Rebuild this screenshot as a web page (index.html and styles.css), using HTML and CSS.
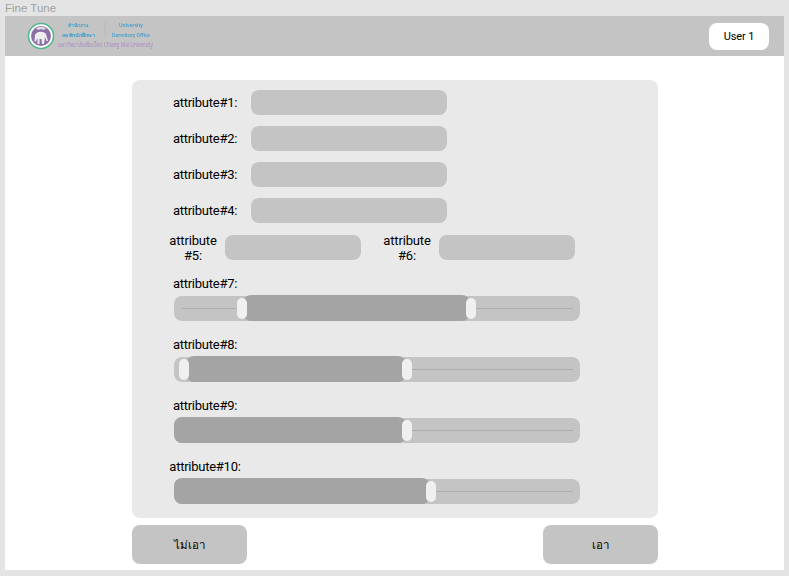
FILE: index.html
```html
<!DOCTYPE html>
<html>
<head>
    <title>Fine Tune</title>
    <link rel="stylesheet" href="styles.css">
</head>
<body>
    <div class="page-title">Fine Tune</div>
    <div class="window">
        <div class="header">
            <svg class="logo" width="130" height="32" viewBox="0 0 130 32">
                <circle cx="13" cy="15" r="12.5" fill="#fff" stroke="#4fb58a" stroke-width="1.5"/>
                <circle cx="13" cy="15" r="10" fill="#8d6fa8"/>
                <path d="M8 8 C10 5 16 5 18 8 C16 9 14 9 13 8 C12 9 10 9 8 8 Z" fill="#ddd"/>
                <path d="M7 14 C9 10 15 10 18 13 L20 20 L18.5 20 L17 16 L16 23 L14 23 L13.5 18 L11.5 18 L11.5 23 L9.5 23 L9.5 17 L7.5 21 L6.5 20 Z" fill="#eee"/>
                <text class="logo-blue" x="40" y="6" textLength="20" lengthAdjust="spacingAndGlyphs">สำนักงาน</text>
                <text class="logo-blue" x="34" y="16" textLength="33" lengthAdjust="spacingAndGlyphs">หอพักนักศึกษา</text>
                <line x1="77" y1="1" x2="77" y2="17" stroke="#b4b4b4" stroke-width="0.6"/>
                <text class="logo-blue" x="91" y="6" textLength="24" lengthAdjust="spacingAndGlyphs">University</text>
                <text class="logo-blue" x="84" y="16" textLength="38" lengthAdjust="spacingAndGlyphs">Dormitory Office</text>
                <text class="logo-purple" x="30" y="26" textLength="95" lengthAdjust="spacingAndGlyphs">มหาวิทยาลัยเชียงใหม่ Chiang Mai University</text>
            </svg>
            <button class="user-btn">User 1</button>
        </div>
        <div class="content">
            <div class="card">
                <div class="field">
                    <label class="field-label">attribute#1:</label>
                    <div class="text-box"></div>
                </div>
                <div class="field">
                    <label class="field-label">attribute#2:</label>
                    <div class="text-box"></div>
                </div>
                <div class="field">
                    <label class="field-label">attribute#3:</label>
                    <div class="text-box"></div>
                </div>
                <div class="field">
                    <label class="field-label">attribute#4:</label>
                    <div class="text-box"></div>
                </div>
                <div class="field-pair">
                    <div class="half">
                        <label class="half-label">attribute #5:</label>
                        <div class="text-box small"></div>
                    </div>
                    <div class="half">
                        <label class="half-label">attribute #6:</label>
                        <div class="text-box small"></div>
                    </div>
                </div>

                <div class="slider-row">
                    <label class="field-label">attribute#7:</label>
                    <div class="slider">
                        <div class="line"></div>
                        <div class="fill" style="left:69px;width:227px"></div>
                        <div class="handle" style="left:63px"></div>
                        <div class="handle" style="left:292px"></div>
                    </div>
                </div>
                <div class="slider-row">
                    <label class="field-label">attribute#8:</label>
                    <div class="slider">
                        <div class="line"></div>
                        <div class="fill" style="left:12px;width:220px"></div>
                        <div class="handle" style="left:5px"></div>
                        <div class="handle" style="left:228px"></div>
                    </div>
                </div>
                <div class="slider-row">
                    <label class="field-label">attribute#9:</label>
                    <div class="slider">
                        <div class="line"></div>
                        <div class="fill" style="left:0;width:232px"></div>
                        <div class="handle" style="left:228px"></div>
                    </div>
                </div>
                <div class="slider-row">
                    <label class="field-label">attribute#10:</label>
                    <div class="slider">
                        <div class="line"></div>
                        <div class="fill" style="left:0;width:256px"></div>
                        <div class="handle" style="left:252px"></div>
                    </div>
                </div>
            </div>
            <div class="actions">
                <button class="action-btn">ไม่เอา</button>
                <button class="action-btn">เอา</button>
            </div>
        </div>
    </div>
</body>
</html>
```

FILE: styles.css
```css
body {
    margin: 0;
    padding: 0;
    height: 576px;
    overflow: hidden;
    background: #e4e4e4;
    color: #000;
    font-family: Roboto, "Noto Sans", sans-serif;
    font-size: 13px;
}
.page-title {
    height: 16px;
    padding-left: 5px;
    font-family: "Liberation Sans", sans-serif;
    font-size: 11.5px;
    line-height: 16px;
    color: #a2a2a2;
}
.window {
    width: 779px;
    height: 554px;
    margin-left: 5px;
    background: #fff;
}
.header {
    height: 40px;
    box-sizing: border-box;
    padding: 0 15px 0 23px;
    background: #c4c4c4;
    display: flex;
    align-items: center;
    justify-content: space-between;
}
.logo {
    display: block;
    margin-top: 2px;
    overflow: visible;
    filter: blur(0.3px);
}
.logo-blue {
    font-family: "Noto Sans", sans-serif;
    font-size: 5px;
    font-weight: 600;
    fill: #3f9fcf;
}
.logo-purple {
    font-family: "Noto Sans", sans-serif;
    font-size: 6.5px;
    fill: #a98bc4;
}
.user-btn {
    width: 60px;
    height: 27px;
    border: none;
    border-radius: 8px;
    background: #fff;
    color: #000;
    font-family: Roboto, sans-serif;
    font-size: 11px;
    letter-spacing: -0.1px;
    padding: 0;
}
.content {
    padding: 24px 0 0 127px;
    width: 526px;
}
.card {
    box-sizing: border-box;
    height: 438px;
    padding: 10px 0 0 36px;
    background: #e9e9e9;
    border-radius: 8px;
}
.field {
    display: flex;
    align-items: center;
    gap: 9px;
    height: 25px;
    margin-bottom: 11px;
}
.field-label {
    width: 74px;
    text-align: center;
    line-height: 16px;
    letter-spacing: -0.25px;
    white-space: nowrap;
}
.text-box {
    width: 196px;
    height: 25px;
    background: #c4c4c4;
    border-radius: 8px;
}
.text-box.small {
    width: 136.5px;
}
.field-pair {
    display: flex;
    gap: 22px;
    height: 25px;
    margin-top: 12px;
    padding-left: 1px;
}
.half {
    display: flex;
    align-items: center;
    gap: 7.5px;
}
.half-label {
    width: 48px;
    text-align: center;
    line-height: 15px;
    letter-spacing: -0.15px;
}
.slider-row {
    margin-top: 15px;
}
.slider-row .field-label {
    display: block;
    height: 16px;
    line-height: 18px;
    margin-bottom: 5px;
}
.slider {
    position: relative;
    width: 406px;
    height: 25px;
    margin-left: 6px;
    background: #c4c4c4;
    border-radius: 8px;
}
.line {
    position: absolute;
    left: 8px;
    right: 7px;
    top: 12px;
    height: 1px;
    background: #adadad;
}
.fill {
    position: absolute;
    top: -1px;
    bottom: 0;
    background: #a4a4a4;
    border-radius: 8px;
}
.handle {
    position: absolute;
    top: 2px;
    width: 10px;
    height: 21px;
    background: #f0f0f0;
    border-radius: 5px;
}
.actions {
    display: flex;
    justify-content: space-between;
    margin-top: 7px;
}
.action-btn {
    width: 115px;
    height: 39px;
    border: none;
    border-radius: 8px;
    background: #c4c4c4;
    color: #000;
    font-family: Roboto, "Noto Sans", sans-serif;
    font-size: 11.5px;
    padding: 0;
}
```
